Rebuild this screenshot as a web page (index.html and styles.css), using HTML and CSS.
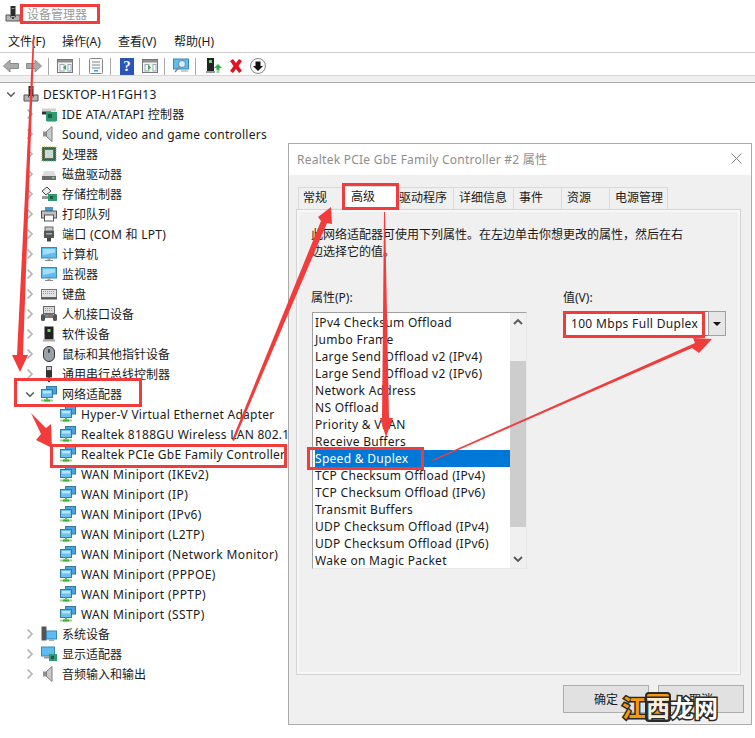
FILE: index.html
```html
<!DOCTYPE html>
<html lang="zh">
<head>
<meta charset="utf-8">
<title>设备管理器</title>
<link rel="stylesheet" href="styles.css">
</head>
<body>
<svg class="defs" width="0" height="0">
  <symbol id="pc" viewBox="0 0 16 16"><rect x="5.500" y="0" width="5" height="10" fill="#2b2b2b"/><rect x="6.500" y="2" width="3" height="1" fill="#888"/><path d="M1 9h4.500v2h5V9h4.500v6H1z" fill="#b5b5b5" stroke="#555" stroke-width="1"/><rect x="7" y="11" width="2" height="2" fill="#444"/></symbol>
  <symbol id="net" viewBox="0 0 16 16"><rect x="5.500" y="0.500" width="10" height="7.500" fill="#4aa3df" stroke="#35799f"/><rect x="0.500" y="3.500" width="11" height="8" fill="#6cc0ee" stroke="#2f7ca8"/><rect x="2" y="5" width="8" height="2.500" fill="#b9e4fa"/><rect x="5" y="11.500" width="2" height="2" fill="#57b947"/><rect x="0" y="13.500" width="12" height="2" fill="#9bd38c"/><rect x="3" y="13.500" width="6" height="2" fill="#3fae3a"/></symbol>
  <symbol id="spk" viewBox="0 0 16 16"><path d="M2 5.500h3.500V10.500H2z" fill="#8f8f8f"/><path d="M5.500 5.500L11 0.500V15.500L5.500 10.500z" fill="#c9c9c9" stroke="#7e7e7e"/></symbol>
  <symbol id="ide" viewBox="0 0 16 16"><path d="M1 2.500h14v3H1z" fill="#cfcfcf"/><rect x="1" y="5.500" width="9" height="3" fill="#333"/><rect x="5" y="6" width="11" height="9" fill="#2f9a70"/><rect x="7" y="8" width="4" height="4" fill="#1b5c44"/><path d="M6 15h9v1H6z" fill="#d9b13c"/></symbol>
  <symbol id="cpu" viewBox="0 0 16 16"><rect x="1" y="1" width="14" height="14" fill="#2c6b50"/><rect x="1" y="1" width="14" height="14" fill="none" stroke="#b8a44c" stroke-dasharray="1 1"/><rect x="3.500" y="3.500" width="9" height="9" fill="#cfd9d2" stroke="#5f6f66"/></symbol>
  <symbol id="disk" viewBox="0 0 16 16"><path d="M3 5h10l2 5H1z" fill="#dcdcdc"/><rect x="1" y="10" width="14" height="4" fill="#6a6a6a"/><rect x="11" y="11" width="2.500" height="1.500" fill="#6fe06a"/></symbol>
  <symbol id="stor" viewBox="0 0 16 16"><path d="M1 5l5-4 4 4-5 4z" fill="#eee" stroke="#444"/><rect x="1" y="10" width="7" height="3" fill="#999"/><rect x="7" y="8" width="9" height="7" fill="#2f9a70"/><rect x="9" y="10" width="3" height="3" fill="#1b5c44"/></symbol>
  <symbol id="prn" viewBox="0 0 16 16"><rect x="4" y="1" width="8" height="4" fill="#3f9bd6"/><rect x="0.500" y="5" width="15" height="7" fill="#bfbfbf" stroke="#555"/><rect x="3.500" y="9" width="9" height="6" fill="#fff" stroke="#555"/></symbol>
  <symbol id="port" viewBox="0 0 16 16"><rect x="4" y="1" width="8" height="4" fill="#c8c8c8" stroke="#666"/><rect x="3" y="5" width="10" height="7" fill="#555"/><rect x="5" y="7" width="6" height="1.500" fill="#aaa"/><rect x="6" y="12" width="4" height="3.500" fill="#444"/></symbol>
  <symbol id="mon" viewBox="0 0 16 16"><rect x="0.500" y="1.500" width="15" height="10.500" fill="#5dbcf0" stroke="#3b87b8"/><path d="M2 3h12v3.500L2 9z" fill="#a8dcf8"/><rect x="6.500" y="12" width="3" height="2" fill="#aaa"/><rect x="4" y="14" width="8" height="1" fill="#8a8a8a"/></symbol>
  <symbol id="kbd" viewBox="0 0 16 16"><rect x="0.500" y="3.500" width="15" height="8" fill="#e3e3e3" stroke="#777"/><path d="M2 5.500h12M2 7.500h12" stroke="#9a9a9a" stroke-dasharray="1 1"/><rect x="0" y="11.500" width="16" height="2" fill="#555"/></symbol>
  <symbol id="hid" viewBox="0 0 16 16"><rect x="2.500" y="0.500" width="11" height="7" fill="#ddd" stroke="#666"/><path d="M4 2.500h8M4 4.500h8" stroke="#999" stroke-dasharray="1 1"/><rect x="0" y="8" width="4" height="7" rx="1.500" fill="#555"/><rect x="12" y="8" width="4" height="7" rx="1.500" fill="#555"/><rect x="4" y="8" width="8" height="4" fill="#777"/><rect x="5" y="9" width="2" height="2" fill="#3f9bd6"/><rect x="9" y="9" width="2" height="2" fill="#d64f3f"/></symbol>
  <symbol id="soft" viewBox="0 0 16 16"><rect x="3.500" y="0.500" width="9" height="13" fill="#222"/><rect x="6.500" y="3" width="3" height="3" fill="#66e060"/><rect x="2" y="13.500" width="12" height="2" fill="#aaa"/></symbol>
  <symbol id="mouse" viewBox="0 0 16 16"><rect x="2.500" y="0.500" width="11" height="15" rx="5.500" fill="#98a2aa" stroke="#333"/><rect x="7" y="3" width="2" height="4" rx="1" fill="#444"/></symbol>
  <symbol id="usb" viewBox="0 0 16 16"><rect x="5.500" y="0.500" width="5" height="4" fill="#ccc" stroke="#555"/><rect x="5" y="4.500" width="6" height="7" fill="#333"/><rect x="7" y="11.500" width="2" height="4.500" fill="#333"/></symbol>
  <symbol id="sys" viewBox="0 0 16 16"><rect x="0.500" y="0.500" width="5" height="14" fill="#555"/><rect x="5.500" y="5" width="10" height="8" fill="#5dbcf0" stroke="#3b87b8"/><rect x="8" y="13" width="5" height="2" fill="#aaa"/></symbol>
  <symbol id="disp" viewBox="0 0 16 16"><rect x="0.500" y="1" width="13" height="9" fill="#5dbcf0" stroke="#3b87b8"/><rect x="8" y="8" width="8" height="7" fill="#2f9a70"/><rect x="10" y="10" width="3" height="3" fill="#1b5c44"/><rect x="3" y="10.500" width="5" height="2" fill="#999"/></symbol>
  <symbol id="chev" viewBox="0 0 8 12"><path d="M1.500 1.500L6 6l-4.500 4.500" fill="none" stroke="#b4b4b4" stroke-width="1.700"/></symbol>
  <symbol id="down" viewBox="0 0 12 8"><path d="M1.500 1.500L6 6l4.500-4.500" fill="none" stroke="#555" stroke-width="1.700"/></symbol>
  <symbol id="win" viewBox="0 0 16 16"><rect x="0.500" y="1.500" width="15" height="13" fill="#f2f2f2" stroke="#777"/><rect x="1" y="2" width="14" height="2.500" fill="#8f8f8f"/><rect x="3" y="6.500" width="4" height="6.500" fill="#fff" stroke="#9ab"/><rect x="11" y="6.500" width="3" height="6.500" fill="#fff" stroke="#9ab"/></symbol>
</svg>

<header class="titlebar">
  <svg class="ico-title"><use href="#pc"/></svg>
  <span class="apptitle">设备管理器</span>
</header>
<nav class="menu">
  <span class="menu-item m1">文件(F)</span>
  <span class="menu-item">操作(A)</span>
  <span class="menu-item">查看(V)</span>
  <span class="menu-item">帮助(H)</span>
</nav>
<div class="toolbar">
  <svg class="tb tb-arrow" viewBox="0 0 16 14"><path d="M0.500 7L7 1v3.500h8.500v5H7V13z" fill="#aaa" stroke="#8a8a8a"/></svg>
  <svg class="tb tb-arrow gap7" viewBox="0 0 16 14"><path d="M15.500 7L9 1v3.500H0.500v5H9V13z" fill="#aaa" stroke="#8a8a8a"/></svg>
  <i class="sep"></i>
  <svg class="tb tb16 g8" viewBox="0 0 16 16"><use href="#win"/><path d="M9 7v5l-3-2.500z" fill="#2fae3a"/></svg>
  <i class="sep"></i>
  <svg class="tb tb16 g8" viewBox="0 0 16 16"><rect x="1.500" y="0.500" width="13" height="15" rx="1" fill="#f7f7f7" stroke="#888"/><path d="M4 4h8M4 7h8M4 10h8" stroke="#7a8a99"/><rect x="6" y="12" width="4" height="1.500" fill="#3aa0e0"/></svg>
  <i class="sep"></i>
  <span class="tb tb-help g9">?</span>
  <svg class="tb tb16 g8" viewBox="0 0 16 16"><use href="#win"/><path d="M6 7v5l3-2.500z" fill="#2fae3a"/></svg>
  <i class="sep"></i>
  <svg class="tb tb16 g8" viewBox="0 0 16 16"><rect x="0.500" y="1" width="15" height="10" fill="#5dbcf0" stroke="#3b87b8"/><circle cx="9" cy="6" r="3.500" fill="#d8f0fc" stroke="#6f8a99"/><path d="M6.500 8.500L2 14" stroke="#888" stroke-width="1.500"/><path d="M8 13h7" stroke="#999"/></svg>
  <i class="sep"></i>
  <svg class="tb tb16 g10" viewBox="0 0 16 16"><rect x="1" y="0" width="7" height="13" fill="#222"/><rect x="3" y="2" width="3" height="3" fill="#66e060"/><rect x="0" y="13" width="9" height="2" fill="#999"/><path d="M12 6l4 4h-2.500v2.500h-3V10H8z" fill="#25b844"/><rect x="10.500" y="13.500" width="3" height="1" fill="#25b844"/></svg>
  <svg class="tb tb16 g6" viewBox="0 0 16 16"><path d="M2 3l3-2 3 4 3-4 3 2-3.500 5L14 13l-3 2-3-4-3 4-3-2 3.500-5z" fill="#e0141e"/></svg>
  <svg class="tb tb16 g6" viewBox="0 0 16 16"><circle cx="8" cy="8" r="7.500" fill="#fafafa" stroke="#888"/><path d="M5.500 3.500h5V8h2.500L8 13 3 8h2.500z" fill="#111"/></svg>
</div>
<div class="band"></div>

<main class="tree">
  <div class="row root"><svg class="chev-down"><use href="#down"/></svg><svg class="ico ico-root"><use href="#pc"/></svg><span class="lat">DESKTOP-H1FGH13</span></div>
  <div class="row"><svg class="chev"><use href="#chev"/></svg><svg class="ico"><use href="#ide"/></svg><span class="lat">IDE ATA/ATAPI 控制器</span></div>
  <div class="row"><svg class="chev"><use href="#chev"/></svg><svg class="ico"><use href="#spk"/></svg><span class="lat">Sound, video and game controllers</span></div>
  <div class="row"><svg class="chev"><use href="#chev"/></svg><svg class="ico"><use href="#cpu"/></svg><span>处理器</span></div>
  <div class="row"><svg class="chev"><use href="#chev"/></svg><svg class="ico"><use href="#disk"/></svg><span>磁盘驱动器</span></div>
  <div class="row"><svg class="chev"><use href="#chev"/></svg><svg class="ico"><use href="#stor"/></svg><span>存储控制器</span></div>
  <div class="row"><svg class="chev"><use href="#chev"/></svg><svg class="ico"><use href="#prn"/></svg><span>打印队列</span></div>
  <div class="row"><svg class="chev"><use href="#chev"/></svg><svg class="ico"><use href="#port"/></svg><span class="lat">端口 (COM 和 LPT)</span></div>
  <div class="row"><svg class="chev"><use href="#chev"/></svg><svg class="ico"><use href="#mon"/></svg><span>计算机</span></div>
  <div class="row"><svg class="chev"><use href="#chev"/></svg><svg class="ico"><use href="#mon"/></svg><span>监视器</span></div>
  <div class="row"><svg class="chev"><use href="#chev"/></svg><svg class="ico"><use href="#kbd"/></svg><span>键盘</span></div>
  <div class="row"><svg class="chev"><use href="#chev"/></svg><svg class="ico"><use href="#hid"/></svg><span>人机接口设备</span></div>
  <div class="row"><svg class="chev"><use href="#chev"/></svg><svg class="ico"><use href="#soft"/></svg><span>软件设备</span></div>
  <div class="row"><svg class="chev"><use href="#chev"/></svg><svg class="ico"><use href="#mouse"/></svg><span>鼠标和其他指针设备</span></div>
  <div class="row"><svg class="chev"><use href="#chev"/></svg><svg class="ico"><use href="#usb"/></svg><span>通用串行总线控制器</span></div>
  <div class="row"><svg class="chev-down chev-down-cat"><use href="#down"/></svg><svg class="ico"><use href="#net"/></svg><span>网络适配器</span></div>
  <div class="row child"><svg class="ico"><use href="#net"/></svg><span class="lat">Hyper-V Virtual Ethernet Adapter</span></div>
  <div class="row child"><svg class="ico"><use href="#net"/></svg><span class="lat">Realtek 8188GU Wireless LAN 802.11n</span></div>
  <div class="row child"><svg class="ico"><use href="#net"/></svg><span class="lat">Realtek PCIe GbE Family Controller #2</span></div>
  <div class="row child"><svg class="ico"><use href="#net"/></svg><span class="lat wan">WAN Miniport (IKEv2)</span></div>
  <div class="row child"><svg class="ico"><use href="#net"/></svg><span class="lat wan">WAN Miniport (IP)</span></div>
  <div class="row child"><svg class="ico"><use href="#net"/></svg><span class="lat wan">WAN Miniport (IPv6)</span></div>
  <div class="row child"><svg class="ico"><use href="#net"/></svg><span class="lat wan">WAN Miniport (L2TP)</span></div>
  <div class="row child"><svg class="ico"><use href="#net"/></svg><span class="lat wan">WAN Miniport (Network Monitor)</span></div>
  <div class="row child"><svg class="ico"><use href="#net"/></svg><span class="lat wan">WAN Miniport (PPPOE)</span></div>
  <div class="row child"><svg class="ico"><use href="#net"/></svg><span class="lat wan">WAN Miniport (PPTP)</span></div>
  <div class="row child"><svg class="ico"><use href="#net"/></svg><span class="lat wan">WAN Miniport (SSTP)</span></div>
  <div class="row"><svg class="chev"><use href="#chev"/></svg><svg class="ico"><use href="#sys"/></svg><span>系统设备</span></div>
  <div class="row"><svg class="chev"><use href="#chev"/></svg><svg class="ico"><use href="#disp"/></svg><span>显示适配器</span></div>
  <div class="row"><svg class="chev"><use href="#chev"/></svg><svg class="ico"><use href="#spk"/></svg><span>音频输入和输出</span></div>
</main>

<section class="dialog">
  <div class="dlg-title">
    <span class="dlg-name">Realtek PCIe GbE Family Controller #2 属性</span>
    <svg class="dlg-close" viewBox="0 0 11 11"><path d="M0.500 0.500l10 10M10.500 0.500l-10 10" stroke="#808080" fill="none"/></svg>
  </div>
  <div class="tabs">
    <span class="tab t1">常规</span>
    <span class="tab t2 active">高级</span>
    <span class="tab t3">驱动程序</span>
    <span class="tab t4">详细信息</span>
    <span class="tab t5">事件</span>
    <span class="tab t5">资源</span>
    <span class="tab t6">电源管理</span>
  </div>
  <div class="panel">
    <p class="desc">此网络适配器可使用下列属性。在左边单击你想更改的属性，然后在右<br>边选择它的值。</p>
    <div class="fields">
      <div class="col-prop">
        <label class="lbl">属性(P):</label>
        <div class="listbox">
          <ul class="items">
            <li>IPv4 Checksum Offload</li>
            <li>Jumbo Frame</li>
            <li>Large Send Offload v2 (IPv4)</li>
            <li>Large Send Offload v2 (IPv6)</li>
            <li>Network Address</li>
            <li>NS Offload</li>
            <li>Priority &amp; VLAN</li>
            <li>Receive Buffers</li>
            <li class="sel">Speed &amp; Duplex</li>
            <li>TCP Checksum Offload (IPv4)</li>
            <li>TCP Checksum Offload (IPv6)</li>
            <li>Transmit Buffers</li>
            <li>UDP Checksum Offload (IPv4)</li>
            <li>UDP Checksum Offload (IPv6)</li>
            <li>Wake on Magic Packet</li>
          </ul>
          <div class="scroll">
            <svg class="sb-arrow" viewBox="0 0 12 8"><path d="M2 6l4-4 4 4" fill="none" stroke="#555" stroke-width="1.800"/></svg>
            <div class="thumb"></div>
            <svg class="sb-arrow" viewBox="0 0 12 8"><path d="M2 2l4 4 4-4" fill="none" stroke="#555" stroke-width="1.800"/></svg>
          </div>
        </div>
      </div>
      <div class="col-val">
        <label class="lbl">值(V):</label>
        <div class="combo-row">
          <div class="combo">100 Mbps Full Duplex</div>
          <div class="combo-btn"><svg class="combo-arrow" viewBox="0 0 8 4"><path d="M0 0h8L4 4z" fill="#111"/></svg></div>
        </div>
      </div>
    </div>
  </div>
  <div class="buttons">
    <button class="btn">确定</button>
    <button class="btn">取消</button>
  </div>
</section>

<svg class="notes" viewBox="0 0 755 738">
  <g fill="none" stroke="#f23c3c" stroke-width="3">
    <rect x="21.500" y="5.500" width="77" height="17"/>
    <rect x="15.500" y="379.500" width="125" height="26"/>
    <rect x="51.500" y="445.500" width="234" height="21"/>
    <rect x="308.500" y="448.500" width="114" height="20"/>
    <rect x="343.500" y="184.500" width="54" height="24"/>
    <rect x="564.500" y="312.500" width="139" height="24"/>
  </g>
  <g fill="#f23c3c">
    <path d="M33 35h1.500L23 355h5l-8 17-8-17h5z"/>
    <path d="M31 413l15 15 5-4 1 24-16-8 5-6z"/>
    <path d="M232 440l2 1 93-218 5 1-1-17-13 10 3 4z"/>
    <path d="M384 212h1l4 206h4l-7 19-6-19h2z"/>
    <path d="M432 460l1 1 259-113 7 5 13-14-19-1 2 5z"/>
  </g>
</svg>

<div class="brand">
  <span class="b-jiang">江</span><span class="b-xi">西</span><span class="b-rest">龙网</span>
</div>
</body>
</html>
```

FILE: styles.css
```css
* { box-sizing: border-box; }
html, body { margin: 0; padding: 0; }
body {
  position: relative;
  width: 755px;
  height: 738px;
  overflow: hidden;
  background: #fff;
  color: #1a1a1a;
  font-family: "Noto Sans", "Noto Sans CJK SC", sans-serif;
  font-size: 12px;
}
.defs { position: absolute; }

.titlebar { display: flex; align-items: center; height: 30px; padding: 0 0 2px 5px; }
.ico-title { width: 16px; height: 16px; }
.apptitle { margin-left: 6px; color: #9a9a9a; font-size: 12px; }

.menu { display: flex; height: 23px; align-items: center; padding: 0 0 0 8px; border-bottom: 1px solid #cfcfcf; }
.menu-item { width: 56px; white-space: nowrap; }
.m1 { width: 54px; }

.toolbar { display: flex; align-items: center; height: 22px; padding: 4px 0 0 3px; }
.tb { flex: none; display: block; }
.tb-arrow { width: 16px; height: 14px; }
.gap7 { margin-left: 7px; }
.tb16 { width: 16px; height: 16px; }
.tb-help { width: 14px; height: 17px; line-height: 17px; text-align: center; background: #2b54b8; color: #fff; font-family: "Liberation Serif", serif; font-size: 15px; font-weight: 700; }
.g6 { margin-left: 6px; }
.g8 { margin-left: 8px; }
.g9 { margin-left: 9px; }
.g10 { margin-left: 10px; }
.sep { flex: none; width: 1px; height: 17px; margin-left: 6px; background: #a8a8a8; }

.band { height: 8px; background: #f0f0f0; border-top: 1px solid #d8d8d8; border-bottom: 1px solid #a9a9a9; }

.tree { display: flex; flex-direction: column; padding-top: 1px; }
.row { display: flex; align-items: center; height: 20px; padding-left: 26px; white-space: nowrap; }
.chev { width: 8px; height: 12px; flex: none; }
.ico { width: 16px; height: 16px; margin-left: 7px; flex: none; }
.row > span { margin-left: 5px; }
.row.root { padding-left: 6px; }
.chev-down { width: 10px; height: 7px; flex: none; }
.root > span { margin-left: 4px; }
.chev-down-cat { margin-left: -1px; margin-right: -1px; }
.row.child { padding-left: 60px; }
.child .ico { margin-left: 0; }
.lat { letter-spacing: 0.260px; }
.wan { letter-spacing: 0.380px; }

.dialog {
  position: absolute;
  left: 288px;
  top: 143px;
  width: 464px;
  height: 582px;
  background: #f0f0f0;
  border: 1px solid #ababab;
  display: flex;
  flex-direction: column;
}
.dlg-title { flex: none; display: flex; align-items: center; justify-content: space-between; height: 31px; background: #fff; padding: 0 9px 2px 8px; }
.dlg-name { color: #8e8e8e; letter-spacing: 0.250px; }
.dlg-close { width: 11px; height: 11px; }

.tabs { flex: none; display: flex; align-items: flex-end; height: 34px; padding-left: 9px; }
.tab { height: 22px; display: flex; align-items: center; padding: 0 0 4px 5px; border: 1px solid #d9d9d9; border-bottom: none; margin-left: -1px; white-space: nowrap; }
.tab.active { height: 24px; padding-bottom: 5px; background: #fff; margin-bottom: -1px; position: relative; }
.t1 { width: 46px; padding-left: 4px; margin-left: 0; }
.t2 { width: 56px; padding-left: 7px; }
.t3 { width: 56px; padding-left: 0; }
.t4 { width: 61px; }
.t5 { width: 49px; }
.t6 { width: 59px; }

.panel { flex: none; margin-left: 7px; width: 445px; height: 466px; border: 1px solid #d4d4d4; box-shadow: inset 0 0 0 2px #f7f7f7; padding: 16px 0 0 14px; }
.desc { margin: 0; line-height: 17px; height: 34px; }
.fields { display: flex; margin-top: 29px; }
.col-prop { width: 252px; }
.lbl { display: block; height: 17px; line-height: 17px; margin-bottom: 6px; }
.listbox { display: flex; margin-left: 1px; width: 215px; height: 257px; background: #fff; border: 1px solid #a0a0a0; border-right-color: #e8e8e8; border-bottom-color: #e8e8e8; padding: 0 0 0 2px; }
.items { flex: 1; margin: 0; padding: 1px 0 0; list-style: none; }
.items li { height: 17px; line-height: 17px; white-space: nowrap; letter-spacing: 0.290px; }
.items li.sel { background: #0078d7; color: #fff; }
.scroll { flex: none; width: 16px; display: flex; flex-direction: column; align-items: center; justify-content: space-between; background: #f0f0f0; }
.sb-arrow { width: 12px; height: 8px; margin: 5px 0; flex: none; }
.thumb { width: 16px; height: 166px; background: #cdcdcd; margin-top: 22px; margin-bottom: 16px; }

.combo-row { display: flex; margin-top: -1px; }
.combo { width: 145px; height: 25px; line-height: 23px; background: #fff; border: 1px solid #7a7a7a; border-right: none; padding-left: 7px; letter-spacing: 0.320px; white-space: nowrap; overflow: hidden; }
.combo-btn { width: 18px; height: 25px; background: #e6e6e6; border: 1px solid #a0a0a0; display: flex; align-items: center; justify-content: center; }
.combo-arrow { width: 8px; height: 4px; }

.buttons { flex: none; display: flex; gap: 9px; margin-top: 10px; margin-left: 274px; width: 190px; }
.btn { width: 86px; height: 28px; flex: none; background: #e1e1e1; border: 1px solid #adadad; padding: 0; font: inherit; color: #1a1a1a; }

.notes { position: absolute; left: 0; top: 0; width: 755px; height: 738px; pointer-events: none; }

.brand { position: absolute; left: 622px; top: 693px; display: flex; align-items: center; font-family: "Noto Sans CJK SC", sans-serif; font-weight: 700; font-size: 24px; line-height: 28px; }
.brand span { -webkit-text-stroke: 3px #2a2a2a; paint-order: stroke fill; }
.b-jiang { color: #f59a0c; }
.b-xi { color: #fbeed8; background: #f59a0c; outline: 2px solid #2a2a2a; outline-offset: -1px; border-radius: 3px; }
.b-rest { color: #fff; }
```
